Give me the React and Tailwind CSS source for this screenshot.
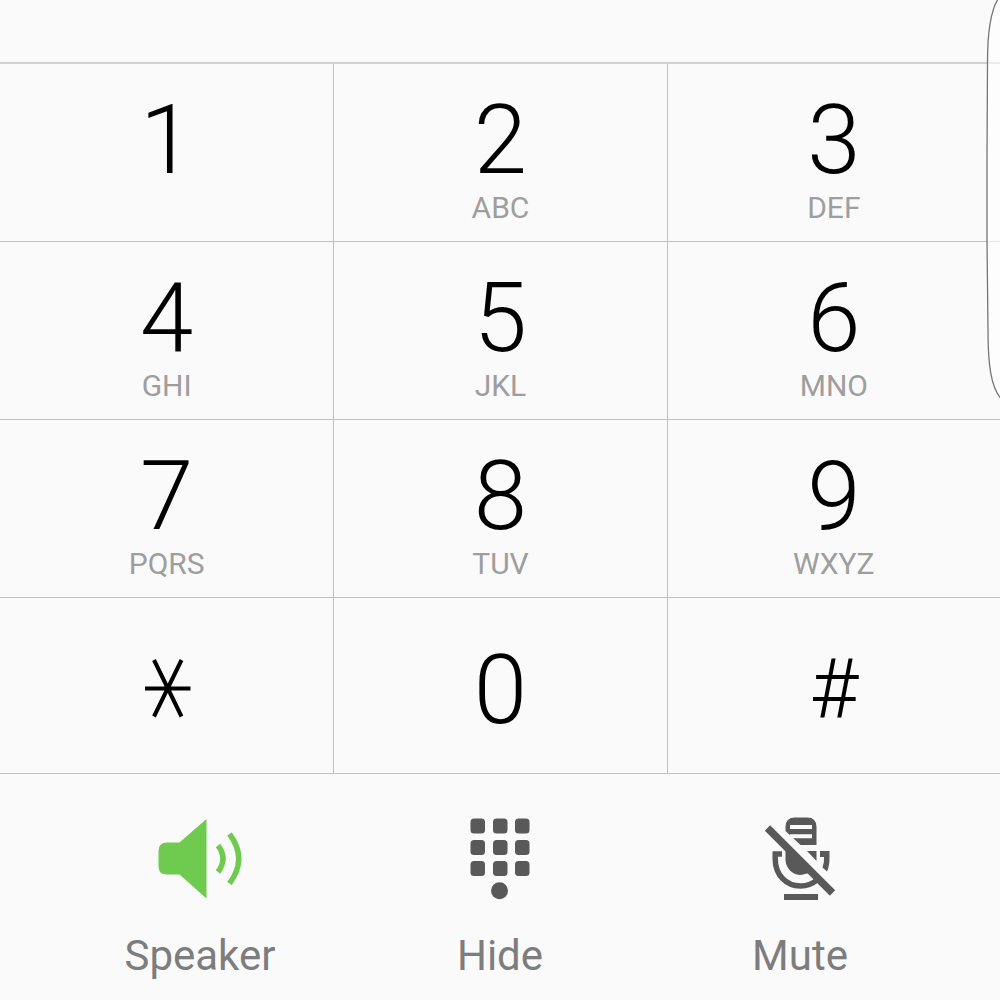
const KEYS = [
  { digit: "1", letters: "" },
  { digit: "2", letters: "ABC" },
  { digit: "3", letters: "DEF" },
  { digit: "4", letters: "GHI" },
  { digit: "5", letters: "JKL" },
  { digit: "6", letters: "MNO" },
  { digit: "7", letters: "PQRS" },
  { digit: "8", letters: "TUV" },
  { digit: "9", letters: "WXYZ" },
];

const CELL = "flex flex-col items-center border-b border-[#c0c0c0] not-nth-[3n+1]:border-l";
const DIGIT = "text-[96px] leading-[96px] font-light text-black";

function StarIcon() {
  return (
    <svg width="48" height="60" viewBox="0 0 48 60" fill="none" stroke="#000" strokeWidth="4" aria-hidden="true">
      <path d="M2 30.500H47.500M11 2L38.500 58.500M38.500 2L11 58.500" />
    </svg>
  );
}

function SpeakerIcon() {
  return (
    <svg width="120" height="120" viewBox="0 0 120 120" aria-hidden="true">
      <path d="M66.500 19V98.500L39.500 74.500H27Q18.500 74.500 18.500 66.500V51Q18.500 42.500 27 42.500H39.500Z" fill="#6fca50" />
      <path d="M78 45.500Q88 58.500 78 72M89.500 34Q108 58.500 89.500 83.500" fill="none" stroke="#6fca50" strokeWidth="5.500" />
    </svg>
  );
}

function KeypadIcon() {
  return (
    <svg width="120" height="120" viewBox="0 0 120 120" fill="#595959" aria-hidden="true">
      {[18.5, 40, 61].map((y) =>
        [30.5, 53, 75].map((x) => <rect key={`${x}-${y}`} x={x} y={y} width="14.500" height="15" rx="3.500" />)
      )}
      <circle cx="59.500" cy="90.700" r="8.500" />
    </svg>
  );
}

function MuteIcon() {
  return (
    <svg width="120" height="120" viewBox="0 0 120 120" aria-hidden="true">
      <path d="M45.500 31V27Q45.500 17.500 55 17.500H67Q76.500 17.500 76.500 27V45H60.500L45.500 31Z" fill="#595959" />
      <path d="M50 27H72M50 36.300H72" stroke="#fafafa" strokeWidth="4" />
      <path d="M45.500 46V59.500A15.500 15.500 0 0 0 61 75L71 72.500L45.500 46Z" fill="#595959" />
      <path d="M67 51H76.500V61Z" fill="#595959" />
      <path d="M32.500 54H42M35.200 54V58.500C35.200 75 46 86 60.500 86Q70 86 77 80" fill="none" stroke="#595959" strokeWidth="5.500" />
      <path d="M80 51H89.500V58Q89.500 66 87 71.500L82.500 67.500Q84.500 62 84 57H80Z" fill="#595959" />
      <path d="M44 97H78" stroke="#595959" strokeWidth="6" />
      <path d="M27.500 28L92.500 93" stroke="#595959" strokeWidth="7.500" />
    </svg>
  );
}

const ACTIONS = [
  { label: "Speaker", Icon: SpeakerIcon },
  { label: "Hide", Icon: KeypadIcon },
  { label: "Mute", Icon: MuteIcon },
];

function EdgePanel() {
  return (
    <svg className="pointer-events-none absolute top-0 right-0" width="14" height="402" viewBox="0 0 14 402" aria-hidden="true">
      <path
        d="M12 -1C4 12 1.500 32 1.500 62L1 160L1 240L2 330C2 365 5 387 15 398.500V-1Z"
        fill="#fff"
        fillOpacity="0.6"
        stroke="#757575"
        strokeWidth="1.300"
      />
    </svg>
  );
}

export default function App() {
  return (
    <main className="relative min-h-screen overflow-hidden bg-[#fafafa] font-['Roboto',sans-serif]">
      <div className="h-[62px]" />
      <div className="grid grid-cols-3 border-t-2 border-[#d0d0d0]">
        {KEYS.map(({ digit, letters }) => (
          <button key={digit} type="button" className={`${CELL} h-[178px] pt-7`}>
            <span className={DIGIT}>{digit}</span>
            {letters && <span className="mt-1 text-[30px] leading-8 text-[#9e9e9e]">{letters}</span>}
          </button>
        ))}
        <button type="button" aria-label="Star" className={`${CELL} h-44 pt-[60px]`}>
          <StarIcon />
        </button>
        <button type="button" className={`${CELL} h-44 pt-11`}>
          <span className={DIGIT}>0</span>
        </button>
        <button type="button" className={`${CELL} h-44 pt-[50px]`}>
          <span className="text-[84px] leading-[84px] font-light text-black">#</span>
        </button>
      </div>
      <div className="grid grid-cols-3 px-[5%] pt-[26px]">
        {ACTIONS.map(({ label, Icon }) => (
          <button key={label} type="button" className="flex flex-col items-center">
            <Icon />
            <span className="mt-3 text-[42px] leading-[48px] text-[#7d7d7d]">{label}</span>
          </button>
        ))}
      </div>
      <EdgePanel />
    </main>
  );
}
